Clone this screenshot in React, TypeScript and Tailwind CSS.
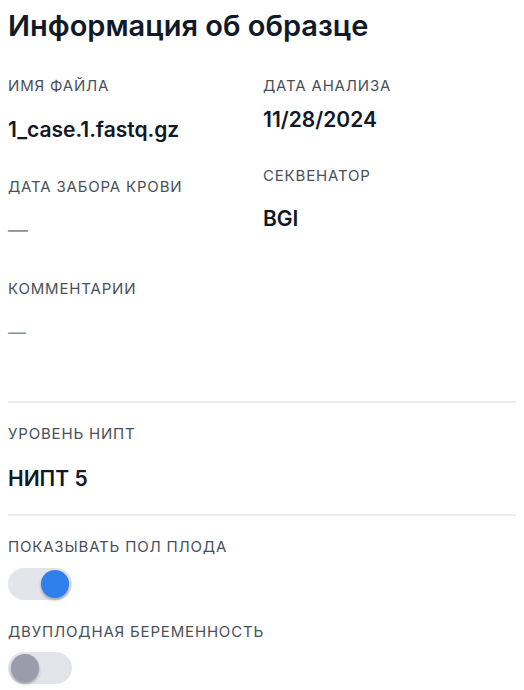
import React from 'react';

const Label = ({ children }: { children: React.ReactNode }) => (
  <div className="text-[15px] leading-5 uppercase tracking-[0.055em] text-[#4a4f5a]">{children}</div>
);

const Dash = ({ small }: { small?: boolean }) => (
  <div className={`${small ? 'text-lg leading-[26px]' : 'text-xl leading-7'} text-[#8a8f98]`}>—</div>
);

const Toggle = ({ on }: { on: boolean }) => (
  <div className="relative w-16 h-8 rounded-full bg-[#e2e4ea]">
    <div
      className={`absolute top-[2px] w-7 h-7 rounded-full shadow-[0_2px_3px_rgba(0,0,0,0.3)] ${
        on ? 'left-[33px] bg-[#2f80ed]' : 'left-[3px] bg-[#9c9bac]'
      }`}
    />
  </div>
);

const App: React.FC = () => {
  return (
    <div className="px-2 pt-2 pb-1 bg-white text-[#111827]" style={{ fontFamily: 'Inter, "Noto Sans", sans-serif' }}>
      <h1 className="text-[29px] leading-9 font-semibold">Информация об образце</h1>

      <div className="grid grid-cols-2 mt-8">
        {/* left column */}
        <div>
          <Label>Имя файла</Label>
          <div className="mt-5 text-[21px] leading-7 font-semibold">1_case.1.fastq.gz</div>
          <div className="mt-[33px]">
            <Label>Дата забора крови</Label>
          </div>
          <div className="mt-[19px]">
            <Dash />
          </div>
          <div className="mt-[35px]">
            <Label>Комментарии</Label>
          </div>
          <div className="mt-[21px]">
            <Dash small />
          </div>
        </div>

        {/* right column */}
        <div className="pl-[1px]">
          <Label>Дата анализа</Label>
          <div className="mt-2.5 text-[21px] leading-7 font-semibold">11/28/2024</div>
          <div className="mt-8">
            <Label>Секвенатор</Label>
          </div>
          <div className="mt-[19px] text-[21px] leading-7 font-semibold">BGI</div>
        </div>
      </div>

      <div className="mt-[55px] h-[2px] bg-[#ebecef]" />

      <div className="mt-[21px]">
        <Label>Уровень НИПТ</Label>
      </div>
      <div className="mt-[21px] text-[21px] leading-7 font-semibold">НИПТ 5</div>

      <div className="mt-[21px] h-[2px] bg-[#ebecef]" />

      <div className="mt-[21px]">
        <Label>Показывать пол плода</Label>
      </div>
      <div className="mt-[11px]">
        <Toggle on />
      </div>

      <div className="mt-[22px]">
        <Label>Двуплодная беременность</Label>
      </div>
      <div className="mt-2.5">
        <Toggle on={false} />
      </div>
    </div>
  );
};

export default App;
